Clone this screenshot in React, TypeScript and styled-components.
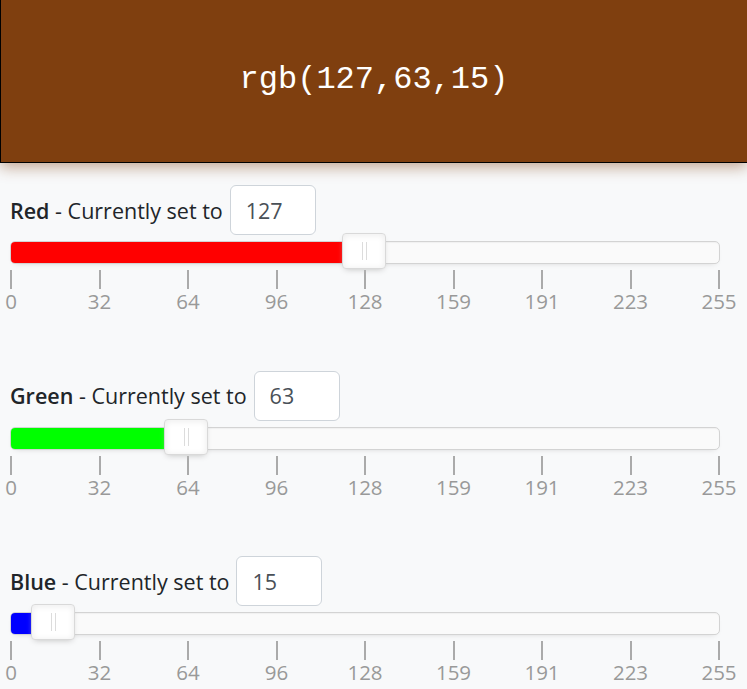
import React from "react";
import styled, { createGlobalStyle } from "styled-components";

const GlobalStyle = createGlobalStyle`
  html, body {
    margin: 0;
    padding: 0;
    background: #f8f9fa;
    font-family: "Open Sans", "Noto Sans", sans-serif;
  }
`;

const Swatch = styled.div<{ $bg: string }>`
  height: 163px;
  background: ${(p) => p.$bg};
  border: 1px solid #000;
  border-top: none;
  border-right: none;
  box-shadow: 0 4px 14px rgba(127, 63, 15, 0.45);
  display: flex;
  align-items: center;
  justify-content: center;
  padding-bottom: 3px;
  box-sizing: border-box;
  color: #fff;
  font-family: "Liberation Mono", monospace;
  font-size: 32px;
`;

const Controls = styled.div`
  display: flex;
  flex-direction: column;
  gap: 56.5px;
  padding: 22px 27px 0 10px;
`;

const Section = styled.div`
  display: flex;
  flex-direction: column;
`;

const LabelRow = styled.div`
  display: flex;
  align-items: center;
  gap: 7px;
  font-size: 21.5px;
  color: #212529;
`;

const Name = styled.span`
  font-weight: 600;
`;

const ValueInput = styled.input`
  width: 86px;
  height: 50px;
  box-sizing: border-box;
  border: 1px solid #ced4da;
  border-radius: 6px;
  background: #fff;
  padding: 0 15px;
  font-family: "Open Sans", "Noto Sans", sans-serif;
  font-size: 21.5px;
  color: #495057;
  outline: none;
`;

const Track = styled.div`
  position: relative;
  margin-top: 6px;
  height: 23px;
  box-sizing: border-box;
  border: 1px solid #d3d3d3;
  border-radius: 5px;
  background: #fafafa;
  box-shadow: inset 0 1px 1px #f0f0f0, 0 3px 6px -5px #bbb;
`;

const Fill = styled.div<{ $color: string }>`
  position: absolute;
  left: 0;
  top: 0;
  bottom: 0;
  background: ${(p) => p.$color};
  border-radius: 4px 0 0 4px;
`;

const Handle = styled.div`
  position: absolute;
  top: -9px;
  width: 44px;
  height: 36px;
  margin-left: -22px;
  box-sizing: border-box;
  border: 1px solid #d9d9d9;
  border-radius: 4px;
  background: #fff;
  box-shadow: inset 0 0 1px #fff, inset 0 1px 7px #ebebeb, 0 3px 6px -3px #bbb;

  &::before,
  &::after {
    content: "";
    position: absolute;
    top: 8px;
    width: 1px;
    height: 18px;
    background: #dcdcdc;
  }
  &::before {
    left: 19px;
  }
  &::after {
    left: 23px;
  }
`;

const Pips = styled.div`
  display: flex;
  justify-content: space-between;
  margin-top: 6px;
  padding: 0 1px;
`;

const Pip = styled.div`
  width: 0;
  display: flex;
  flex-direction: column;
  align-items: center;
`;

const Tick = styled.div`
  width: 2px;
  height: 19px;
  background: #aaa;
  flex-shrink: 0;
`;

const PipLabel = styled.div`
  font-size: 20.5px;
  line-height: 25px;
  color: #999;
  white-space: nowrap;
`;

const channels = [
  { name: "Red", value: 127, color: "#ff0000" },
  { name: "Green", value: 63, color: "#00ff00" },
  { name: "Blue", value: 15, color: "#0000ff" },
];

const pipValues = [0, 32, 64, 96, 128, 159, 191, 223, 255];

function Slider({ name, value, color }: { name: string; value: number; color: string }) {
  const pct = (value / 255) * 100;
  return (
    <Section>
      <LabelRow>
        <span>
          <Name>{name}</Name> - Currently set to
        </span>
        <ValueInput type="text" defaultValue={String(value)} />
      </LabelRow>
      <Track>
        <Fill $color={color} style={{ width: `${pct}%` }} />
        <Handle style={{ left: `${pct}%` }} />
      </Track>
      <Pips>
        {pipValues.map((v) => (
          <Pip key={v}>
            <Tick />
            <PipLabel>{v}</PipLabel>
          </Pip>
        ))}
      </Pips>
    </Section>
  );
}

export default function App() {
  const [r, g, b] = channels.map((c) => c.value);
  return (
    <>
      <GlobalStyle />
      <Swatch $bg={`rgb(${r},${g},${b})`}>rgb({r},{g},{b})</Swatch>
      <Controls>
        {channels.map((c) => (
          <Slider key={c.name} {...c} />
        ))}
      </Controls>
    </>
  );
}
